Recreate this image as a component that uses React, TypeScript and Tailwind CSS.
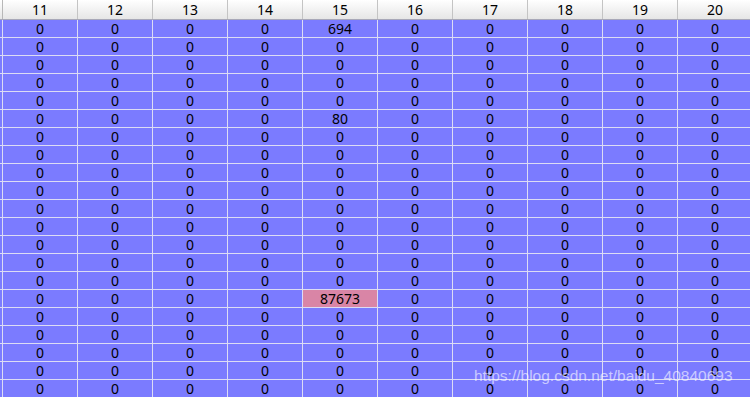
import React from "react";

const cols = [11, 12, 13, 14, 15, 16, 17, 18, 19, 20];
const ROWS = 21;

// values in column 15, everything else is 0
const special: Record<number, string> = { 0: "694", 5: "80", 15: "87673" };

const App = () => {
  return (
    <div
      className="relative w-[750px] h-[397px] overflow-hidden bg-[#7b7bff] text-[14px] text-black"
      style={{ fontFamily: '"Noto Sans", "Open Sans", sans-serif' }}
    >
      {/* header */}
      <div className="flex h-[20px] border-b border-[#a8a8b8] bg-gradient-to-b from-[#ffffff] to-[#e6e6e6]">
        <div className="w-[3px] shrink-0 border-r border-[#b8b8b8]" />
        {cols.map((c) => (
          <div
            key={c}
            className="w-[75px] shrink-0 border-r border-[#c4c4c4] flex items-center justify-center leading-none"
          >
            {c}
          </div>
        ))}
      </div>

      {/* body */}
      {Array.from({ length: ROWS }).map((_, r) => (
        <div key={r} className="flex h-[18px] border-b border-[#dcdcf4]">
          <div className="w-[3px] shrink-0 border-r border-[#dcdcf4]" />
          {cols.map((c) => {
            const v = c === 15 && special[r] ? special[r] : "0";
            const hl = c === 15 && r === 15;
            return (
              <div
                key={c}
                className={`w-[75px] shrink-0 border-r border-[#dcdcf4] flex items-center justify-center leading-none ${
                  hl ? "bg-[#d985a6]" : ""
                }`}
              >
                {v}
              </div>
            );
          })}
        </div>
      ))}

      {/* watermark */}
      <div
        className="absolute left-[474px] top-[367px] text-[15.5px] leading-[18px] text-white/60 whitespace-nowrap"
        style={{ fontFamily: '"Liberation Sans", Arial, sans-serif' }}
      >
        https://blog.csdn.net/baidu_40840693
      </div>
    </div>
  );
};

export default App;
